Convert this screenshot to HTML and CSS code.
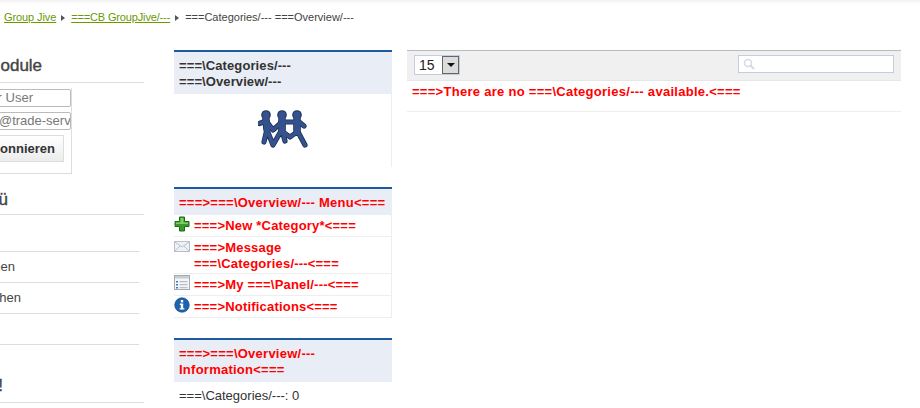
FILE: index.html
```html
<!DOCTYPE html>
<html lang="en">
<head>
<meta charset="utf-8">
<title>Group Jive</title>
<link rel="stylesheet" href="styles.css">
</head>
<body>
<div class="top-shade"></div>
<nav class="crumbs">
  <a class="tight-a" href="#">Group Jive</a><span class="arrow"></span><a class="tight" href="#">===CB GroupJive/---</a><span class="arrow"></span><span>===Categories/--- ===Overview/---</span>
</nav>
<div class="page">
  <aside class="side">
    <h3 class="side-head head-login">Login Module</h3>
    <div class="login">
      <div class="field">Your User</div>
      <div class="field">info@trade-service</div>
      <div class="btn">Abonnieren</div>
    </div>
    <h3 class="side-head head-menu">Menü</h3>
    <ul class="side-list">
      <li>&nbsp;</li>
      <li>Suchen</li>
      <li>Ansehen</li>
      <li>&nbsp;</li>
    </ul>
    <h3 class="side-head head-last">Hallo!</h3>
  </aside>
  <section class="mid">
    <div class="box">
      <h4 class="box-head plain">===\Categories/--- ===\Overview/---</h4>
      <div class="logo-body">
        <svg class="logo" viewBox="0 0 50 38" width="50" height="38" aria-hidden="true">
          <g fill="#1c2e54">
            <circle cx="8" cy="5" r="4.800"/><circle cx="24" cy="5" r="4.800"/><circle cx="39" cy="5" r="4.800"/>
          </g>
          <g fill="none" stroke="#1c2e54" stroke-linecap="round" stroke-linejoin="round">
            <path stroke-width="7.600" d="M8 10l1 9M24 10v10M39 10v10"/>
            <path stroke-width="5.200" d="M8 11L1.500 13.500M9 12l6 8 9-8M24 12h15M40 11l6 5M9 19L6 32M9 20l6 15 8-14M24 20l3 11M25 22l7 5 7-5M39 20l8 15"/>
          </g>
          <g fill="#34538e">
            <circle cx="8" cy="5" r="3.800"/><circle cx="24" cy="5" r="3.800"/><circle cx="39" cy="5" r="3.800"/>
          </g>
          <g fill="none" stroke="#34538e" stroke-linecap="round" stroke-linejoin="round">
            <path stroke-width="6.200" d="M8 10l1 9M24 10v10M39 10v10"/>
            <path stroke-width="3.600" d="M8 11L1.500 13.500M9 12l6 8 9-8M24 12h15M40 11l6 5M9 19L6 32M9 20l6 15 8-14M24 20l3 11M25 22l7 5 7-5M39 20l8 15"/>
          </g>
        </svg>
      </div>
    </div>
    <div class="box">
      <h4 class="box-head red">===&gt;===\Overview/--- Menu&lt;===</h4>
      <ul class="menu">
        <li>
          <svg class="ico" viewBox="0 0 16 16" aria-hidden="true"><path d="M5.500 1h5v4.500H15v5h-4.500V15h-5v-4.500H1v-5h4.500z" fill="#3c9a2c" stroke="#1f6b15" stroke-linejoin="round"/><path d="M6.500 2h3v4.500h4.500v1.500H2V6.500h4.500z" fill="#7fce62"/></svg>
          <span>===&gt;New *Category*&lt;===</span>
        </li>
        <li>
          <svg class="ico" viewBox="0 0 16 16" aria-hidden="true"><rect x="0.500" y="3.500" width="15" height="10" fill="#eef1f6" stroke="#b9bfc9"/><path d="M1 4l7 5 7-5M1 13l5-5M15 13l-5-5" fill="none" stroke="#b9bfc9"/></svg>
          <span>===&gt;Message<br>===\Categories/---&lt;===</span>
        </li>
        <li>
          <svg class="ico" viewBox="0 0 16 16" aria-hidden="true"><rect x="0.500" y="0.500" width="15" height="14" fill="#f4f5f7" stroke="#a5a9b0"/><rect x="1" y="1" width="14" height="2.500" fill="#c9ccd2"/><path d="M2 6h2v1.500H2zM2 9h2v1.500H2zM2 12h2v1.500H2z" fill="#3c78c8"/><path d="M5.500 6.700h8M5.500 9.700h8M5.500 12.700h8" stroke="#aab0bb"/></svg>
          <span>===&gt;My ===\Panel/---&lt;===</span>
        </li>
        <li>
          <svg class="ico" viewBox="0 0 16 16" aria-hidden="true"><circle cx="8" cy="8" r="7.300" fill="#1d62ac" stroke="#124a88" stroke-width="0.600"/><rect x="6.800" y="3" width="2.400" height="2.400" fill="#fff"/><path d="M5.800 6.600h3.400v4.600h1.200v1.400H5.600v-1.400h1.200V8h-1z" fill="#fff"/></svg>
          <span>===&gt;Notifications&lt;===</span>
        </li>
      </ul>
    </div>
    <div class="box last">
      <h4 class="box-head red">===&gt;===\Overview/--- Information&lt;===</h4>
      <p class="info-line">===\Categories/---: 0</p>
    </div>
  </section>
  <main class="main">
    <div class="toolbar">
      <div class="select"><span class="select-val">15</span><span class="select-btn"><span class="caret"></span></span></div>
      <div class="search">
        <svg viewBox="0 0 12 12" width="12" height="12" aria-hidden="true"><circle cx="5" cy="5" r="3.500" fill="none" stroke="#d5dbe6" stroke-width="1.600"/><path d="M7.500 7.500l3.500 3.500" stroke="#d5dbe6" stroke-width="2"/></svg>
      </div>
    </div>
    <div class="empty">===&gt;There are no ===\Categories/--- available.&lt;===</div>
  </main>
</div>
</body>
</html>
```
FILE: styles.css
```css
* { box-sizing: border-box; }
html, body { margin: 0; padding: 0; overflow: hidden; }
body {
  width: 920px;
  height: 408px;
  background: #fff;
  font-family: "Liberation Sans", Arial, sans-serif;
  color: #333;
  font-size: 12px;
}
.top-shade {
  height: 4px;
  background: linear-gradient(#f2f2f2, #fff);
}
.crumbs {
  height: 46px;
  padding: 7px 0 0 4px;
  font-size: 11px;
  line-height: 13px;
  color: #444;
  white-space: nowrap;
}
.crumbs a { color: #6a9a00; text-decoration: underline; }
.crumbs .tight { letter-spacing: -0.15px; }
.crumbs .tight-a { letter-spacing: -0.1px; }
.arrow {
  display: inline-block;
  width: 0;
  height: 0;
  margin: 0 6px 0 5px;
  border-left: 4px solid #555;
  border-top: 3px solid transparent;
  border-bottom: 3px solid transparent;
}
.page {
  display: flex;
  align-items: flex-start;
  margin-left: -60px;
  width: 980px;
}
.side {
  width: 204px;
  flex: none;
  margin-top: 5px;
  overflow: hidden;
}
.side-head {
  margin: 0;
  font-size: 17px;
  font-weight: normal;
  -webkit-text-stroke: 0.4px #444;
  color: #444;
  line-height: 22px;
  white-space: nowrap;
  border-bottom: 1px solid #ddd;
  padding-bottom: 5px;
  text-align: right;
}
.head-login { padding-right: 104px; }
.head-menu { margin-top: 15px; padding-right: 136px; padding-bottom: 3px; }
.head-last { margin-top: 30px; padding-right: 141px; }
.login {
  width: 132px;
  height: 86px;
  margin-top: 5px;
  border: 1px solid #ddd;
  border-top: 0;
  border-left: 0;
  padding-top: 1px;
  text-align: right;
}
.field {
  height: 18px;
  margin: 0 0 5px auto;
  width: 131px;
  border: 1px solid #bbb;
  border-radius: 2px;
  font-size: 13px;
  line-height: 16px;
  color: #777;
  padding-right: 37px;
  overflow: hidden;
  white-space: nowrap;
  text-align: right;
}
.field + .field { text-align: left; padding: 0 0 0 37px; }
.btn {
  width: 124px;
  height: 27px;
  margin: 0 7px 0 0;
  float: right;
  border: 1px solid #ddd;
  background: linear-gradient(#fff, #ececec);
  font-size: 13px;
  font-weight: bold;
  line-height: 25px;
  color: #333;
  padding-right: 8px;
  text-align: right;
}
.side-list {
  list-style: none;
  margin: 0;
  padding: 0;
  width: 199px;
}
.side-list li {
  height: 31px;
  border-bottom: 1px solid #ddd;
  font-size: 13px;
  line-height: 30px;
  color: #444;
  text-align: right;
}
.side-list li:first-child { height: 37px; }
.side-list li:nth-child(2) { padding-right: 124px; }
.side-list li:nth-child(3) { padding-right: 118px; }
.mid {
  width: 218px;
  flex: none;
  margin-left: 30px;
}
.box { margin-bottom: 20px; }
.box.last { margin-bottom: 0; }
.box-head {
  margin: 0;
  background: #e9edf5;
  border-top: 2px solid #1f5a9e;
  padding: 6px 5px 4px;
  font-size: 13px;
  letter-spacing: 0.25px;
  line-height: 16px;
  font-weight: bold;
  color: #333;
}
.box-head.plain { letter-spacing: 0.1px; }
.box-head.red { color: #f00; }
.logo-body {
  height: 73px;
  border-right: 1px solid #eee;
  display: flex;
  justify-content: center;
  padding-top: 16px;
}
.logo { width: 50px; height: 38px; display: block; }
.menu {
  list-style: none;
  margin: 0;
  padding: 0;
  border-right: 1px solid #eee;
}
.menu li {
  display: flex;
  align-items: flex-start;
  gap: 4px;
  border-bottom: 1px solid #eee;
  padding: 2px 0 1px;
  min-height: 22px;
  color: #f00;
  font-weight: bold;
  font-size: 13px;
  letter-spacing: 0.2px;
  line-height: 16px;
}
.menu li span { padding-top: 1px; }
.ico { width: 16px; height: 16px; flex: none; margin-top: -1px; }
.info-line {
  margin: 0;
  padding: 6px 5px 0;
  font-size: 13px;
  line-height: 16px;
  color: #333;
}
.main {
  width: 494px;
  flex: none;
  margin-left: 15px;
}
.toolbar {
  height: 31px;
  display: flex;
  justify-content: space-between;
  align-items: flex-start;
  background: #f0f0f0;
  border-top: 1px solid #bbb;
  border-bottom: 1px solid #e6e6e6;
  padding: 4px 7px;
}
.select {
  width: 46px;
  height: 20px;
  display: flex;
  background: #fff;
  border: 1px solid #c3cde0;
}
.select-val {
  flex: 1;
  font-size: 14px;
  line-height: 18px;
  color: #222;
  padding-left: 4px;
}
.select-btn {
  width: 17px;
  height: 18px;
  background: #dcdcdc;
  border: 1px solid #666;
  display: flex;
  align-items: center;
  justify-content: center;
}
.caret {
  width: 0;
  height: 0;
  border-top: 4px solid #111;
  border-left: 4px solid transparent;
  border-right: 4px solid transparent;
}
.search {
  width: 156px;
  height: 18px;
  background: #fff;
  border: 1px solid #c3cde0;
  padding: 2px 0 0 4px;
  display: flex;
}
.empty {
  height: 31px;
  border-bottom: 1px solid #eee;
  padding: 3px 5px 0;
  font-size: 13px;
  letter-spacing: 0.28px;
  line-height: 16px;
  font-weight: bold;
  color: #f00;
}
```
